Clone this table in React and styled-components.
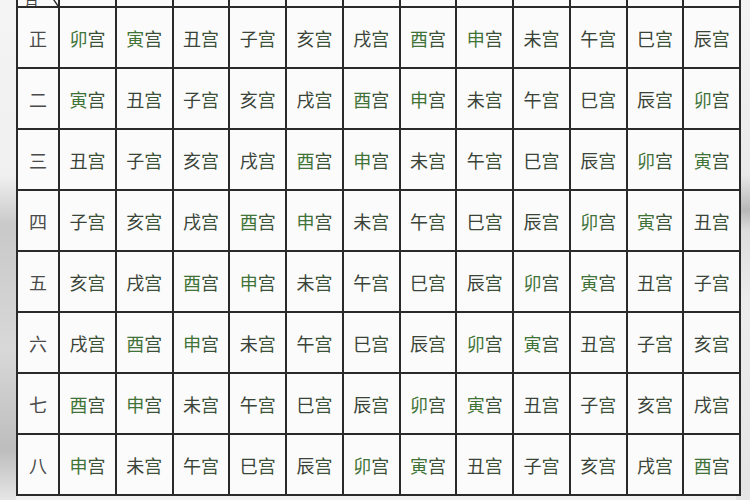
import React from 'react';
import styled, { createGlobalStyle } from 'styled-components';

const GlobalStyle = createGlobalStyle`
  html, body {
    margin: 0;
    padding: 0;
    overflow: hidden;
  }
  body {
    width: 750px;
    height: 500px;
    background: #f1f1f1;
    font-family: "Noto Sans CJK SC", "Noto Sans", sans-serif;
  }
`;

const Page = styled.div`
  width: 750px;
  height: 500px;
  overflow: hidden;
  display: flex;
  padding-left: 16px;
  box-sizing: border-box;
  background:
    linear-gradient(180deg, #f4f4f4 0%, #f0f0f0 35%, #c9c9c9 45%, #d8d8d8 70%, #bdbdbd 90%, #e6e6e6 100%) left / 16px 100% no-repeat,
    linear-gradient(180deg, #f3f3f3 0%, #e9e9e9 35%, #b8b8b8 42%, #dcdcdc 46%, #ececec 60%, #e4e4e4 100%) right / 14px 100% no-repeat,
    #f2f2f2;
`;

const Grid = styled.div`
  margin-top: -55px;
  width: 721px;
  align-self: flex-start;
  display: grid;
  grid-template-columns: 40px repeat(12, 1fr);
  grid-auto-rows: 59px;
  gap: 2px;
  padding: 2px;
  background: #2a2a2a;
`;

const Cell = styled.div`
  background: #fbfbfb;
  display: flex;
  align-items: center;
  justify-content: center;
  font-size: 18px;
  color: #3f5a3c;
`;

const Corner = styled(Cell)`
  position: relative;
  align-items: flex-end;
  justify-content: flex-start;
  overflow: hidden;
`;

const CornerText = styled.span`
  font-size: 15px;
  color: #444;
  margin: 0 0 -6px 6px;
`;

const Diagonal = styled.svg`
  position: absolute;
  inset: 0;
  width: 100%;
  height: 100%;
`;

const Month = styled(Cell)`
  color: #4a4a4a;
  font-size: 18px;
`;

const Branch = styled.span`
  color: ${(p) => (p.green ? '#3f7337' : '#3a4338')};
`;

const Gong = styled.span`
  color: #3c5238;
`;

const branches = ['子', '丑', '寅', '卯', '辰', '巳', '午', '未', '申', '酉', '戌', '亥'];
const greenOnes = ['寅', '酉', '卯', '申'];
const months = ['正', '二', '三', '四', '五', '六', '七', '八'];

const App = () => {
  return (
    <>
      <GlobalStyle />
      <Page>
        <Grid>
          <Corner>
            <Diagonal viewBox="0 0 40 59" preserveAspectRatio="none">
              <line x1="0" y1="0" x2="40" y2="59" stroke="#2a2a2a" strokeWidth="1.4" />
            </Diagonal>
            <CornerText>月</CornerText>
          </Corner>
          {branches.map((_, j) => (
            <Cell key={'h' + j} />
          ))}
          {months.map((m, i) => (
            <React.Fragment key={m}>
              <Month>{m}</Month>
              {branches.map((_, j) => {
                const b = branches[(((3 - i - j) % 12) + 12) % 12];
                return (
                  <Cell key={j}>
                    <Branch green={greenOnes.includes(b)}>{b}</Branch>
                    <Gong>宫</Gong>
                  </Cell>
                );
              })}
            </React.Fragment>
          ))}
        </Grid>
      </Page>
    </>
  );
};

export default App;
